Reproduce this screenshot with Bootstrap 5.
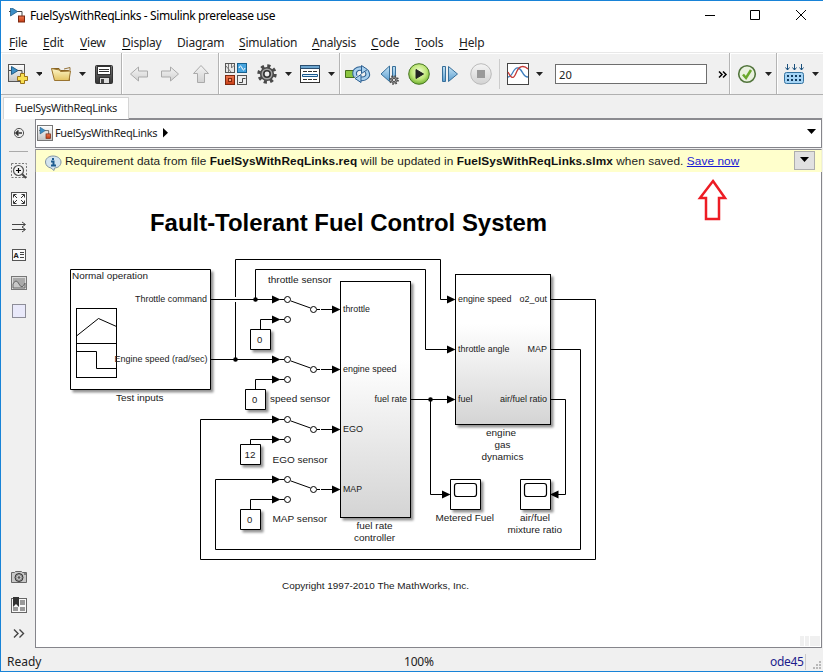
<!DOCTYPE html>
<html lang="en">
<head>
<meta charset="utf-8">
<meta name="viewport" content="width=device-width, initial-scale=1">
<title>FuelSysWithReqLinks - Simulink prerelease use</title>
<link href="https://cdn.jsdelivr.net/npm/bootstrap@5.3.0/dist/css/bootstrap.min.css" rel="stylesheet">
<style>
html,body{height:100%}
body{font-family:"Noto Sans","Open Sans",sans-serif;font-size:12px;line-height:16px;color:#1a1a1a;background:#fff;overflow:hidden}
svg{display:block;flex:none}
.win{height:672px;width:823px;border:1px solid #1883d7;border-right:0;background:#f0f0f0}
.titlebar{height:29px;color:#000;padding:7px 0 0 7px}
.title-text{letter-spacing:-.39px;padding-left:2px}
.menubar{height:23px;padding:5px 0 0 8px;color:#222;border-bottom:1px solid #e8e8e8}
.menubar a{color:inherit;text-decoration:none;letter-spacing:-.2px;white-space:nowrap;flex:none}
.menubar u{text-underline-offset:2px;text-decoration-color:#000}
.menubar a:nth-child(1){width:34px}.menubar a:nth-child(2){width:37px}.menubar a:nth-child(3){width:42px}
.menubar a:nth-child(4){width:55px}.menubar a:nth-child(5){width:62px}.menubar a:nth-child(6){width:73px}
.menubar a:nth-child(7){width:59px}.menubar a:nth-child(8){width:44px}.menubar a:nth-child(9){width:44px}
.tools{height:42px;border-bottom:1px solid #b0b0b0}
.grp{border-right:1px solid #b4b4b4;padding-top:6px;box-shadow:inset 1px 1px 0 #fff;height:41px}
.stop-time{width:152px;height:20px;margin:5px 0 0 4px;border:1px solid #6e6e6e;border-radius:0;background:#fff;padding:0 3px;font-size:11.2px;line-height:18px;color:#222}
.tabs{height:23px;padding:2px 0 0 2px}
.tab-doc{width:126px;height:22px;background:#fff;border:1px solid #d5d5d5;border-bottom:0;padding:2px 0 0 11px;font-size:11px;letter-spacing:-.35px;color:#222;position:relative;z-index:1;white-space:nowrap}
.side{width:34px}
.crumb{height:30px;border:1px solid #85858b;border-top:2px solid #8b8b90;background:#fff;color:#222;padding-bottom:2px}
.crumb .path-name{font-size:11px;letter-spacing:-.34px;margin-left:1px}
.notice{height:23px;background:#ffffcc;border-top:1px solid #8b8b90;border-left:1px solid #a0a0a0;border-right:1px solid #f4f4c8;font:11.8px/23px "Liberation Sans",Arial,sans-serif;color:#222;margin-top:1px;white-space:nowrap}
.notice .msg{letter-spacing:.09px}
.notice b{color:#111}
.notice a{color:#1717d6}
.drop{width:21px;height:19px;background:#e1e1e1;border:1px solid #adadad;margin:1px 6px 0 0}
.sheet{background:#fff;border-left:1px solid #85858b;border-right:1px solid #85858b;border-bottom:1px solid #85858b}
.sheet text{font-family:"Liberation Sans",Arial,sans-serif;font-size:9.5px;fill:#1a1a1a}
.sheet .heading{font-size:24px;font-weight:bold;fill:#000}
.status{height:23px;padding:6px 0 0 6px;color:#222}
.status .state{width:397px}
.status .zoom-level{width:366px;letter-spacing:-.2px}
.edge{width:1px}
.solver{color:#1c1c8c;letter-spacing:-.3px}
</style>
<script src="https://cdn.jsdelivr.net/npm/bootstrap@5.3.0/dist/js/bootstrap.bundle.min.js"></script>
</head>
<body>
<svg width="0" height="0" class="position-absolute" aria-hidden="true">
<defs>
<linearGradient id="gBlock" x1="0" y1="0" x2="0" y2="1"><stop offset=".33" stop-color="#fff"/><stop offset="1" stop-color="#d4d4d4"/></linearGradient>
<linearGradient id="gBlue" x1="0" y1="0" x2="0" y2="1"><stop offset="0" stop-color="#c5e3f5"/><stop offset="1" stop-color="#5a9dcf"/></linearGradient>
<linearGradient id="gGray" x1="0" y1="0" x2="0" y2="1"><stop offset="0" stop-color="#fff"/><stop offset="1" stop-color="#c4c4c4"/></linearGradient>
<linearGradient id="gPale" x1="0" y1="0" x2="0" y2="1"><stop offset="0" stop-color="#f4f4f4"/><stop offset="1" stop-color="#d2d2d2"/></linearGradient>
<linearGradient id="gDark" x1="0" y1="0" x2="0" y2="1"><stop offset="0" stop-color="#777"/><stop offset="1" stop-color="#333"/></linearGradient>
<linearGradient id="gOr" x1="0" y1="0" x2="0" y2="1"><stop offset="0" stop-color="#ee7a52"/><stop offset="1" stop-color="#c63c14"/></linearGradient>
<linearGradient id="gYel" x1="0" y1="0" x2="0" y2="1"><stop offset="0" stop-color="#fdf6c8"/><stop offset="1" stop-color="#e3c362"/></linearGradient>
<radialGradient id="gGreen" cx=".5" cy=".4" r=".6"><stop offset="0" stop-color="#f4ffdc"/><stop offset=".6" stop-color="#bfe678"/><stop offset="1" stop-color="#6fb030"/></radialGradient>
<filter id="shade" x="-20%" y="-20%" width="150%" height="150%"><feDropShadow dx="2.5" dy="2.5" stdDeviation="1.3" flood-color="#000" flood-opacity=".42"/></filter>
<g id="caret"><path d="M0 0h7l-3.500 4z" fill="#222"/></g>
<g id="slk"><path d="M8 5.500h5v5" fill="none" stroke="#444"/><path d="M0 5.500h2" stroke="#444"/><path d="M1.500 1l7 4.500-7 4.500z" fill="#3d8fc6" stroke="#225c85" stroke-width=".8"/><rect x="9.500" y="10" width="6" height="6" fill="url(#gOr)" stroke="#7c2810"/></g>
<g id="cog"><circle r="8" fill="none" stroke="#4a4a4a" stroke-width="3.400" stroke-dasharray="3.142 3.142"/><circle r="6.300" fill="#a4a4a4" stroke="#4a4a4a" stroke-width="1.600"/><circle r="3.200" fill="#eee" stroke="#333" stroke-width="1.600"/></g>
<g id="head"><path d="M0 -4l8.500 4-8.500 4z" fill="#000"/></g>
<g id="switch" fill="none" stroke="#000"><use href="#head" x="272" y=".5" stroke="none"/><use href="#head" x="272" y="20.500" stroke="none"/><path d="M280 .5h4M280 20.500h4M291 2l19.500 7M317 10.500h3M321 10.500h12"/><use href="#head" x="332" y="10.500" stroke="none"/><circle cx="287.500" cy=".5" r="3" fill="#fff"/><circle cx="287.500" cy="20.500" r="3" fill="#fff"/><circle cx="313.500" cy="10.500" r="3" fill="#fff"/></g>
</defs>
</svg>

<main class="win d-flex flex-column">
  <header class="titlebar bg-white d-flex">
    <svg width="20" height="20" viewBox="8 8 20 20"><use href="#slk" x="9" y="6"/></svg>
    <span class="title-text flex-grow-1">FuelSysWithReqLinks - Simulink prerelease use</span>
    <svg width="123" height="20" viewBox="700 8 123 20" fill="none" stroke="#000"><path d="M705 15.500h10M750.500 10.500h9v9h-9zM796 10l10 10M806 10l-10 10"/></svg>
  </header>
  <nav class="menubar bg-white d-flex">
    <a><u>F</u>ile</a><a><u>E</u>dit</a><a><u>V</u>iew</a><a><u>D</u>isplay</a><a>Diag<u>r</u>am</a><a><u>S</u>imulation</a><a><u>A</u>nalysis</a><a><u>C</u>ode</a><a><u>T</u>ools</a><a><u>H</u>elp</a>
  </nav>

  <div class="tools d-flex">
    <div class="grp d-flex">
      <svg width="41" height="30" viewBox="1 59 41 30"><rect x="8.500" y="64.500" width="16" height="17" fill="url(#gGray)" stroke="#555"/><path d="M9 70.500h2M17 70.500h5v4" fill="none" stroke="#444"/><path d="M11.500 66.500l6.500 4-6.500 4z" fill="#3d8fc6" stroke="#225c85"/><path d="M20.500 73.500h4v3h3v4h-3v3h-4v-3h-3v-4h3z" fill="#f8df50" stroke="#9a7218"/><use href="#caret" x="36" y="72"/></svg>
      <svg width="44" height="30" viewBox="42 59 44 30"><path d="M52 68.500h7l1.500 2h9v10h-14z" fill="#c7a556" stroke="#846021"/><path d="M51.500 68.500l3 12h14.500l1.500-9.500-10 .5-1-1.500z" fill="url(#gYel)" stroke="#9a7430"/><path d="M64 69l6-1.500v3" fill="#eee" stroke="#94733a"/><use href="#caret" x="79" y="72"/></svg>
      <svg width="35" height="30" viewBox="86 59 35 30"><rect x="95.500" y="65.500" width="17" height="18" rx="1" fill="url(#gDark)" stroke="#333"/><rect x="97.500" y="66.500" width="13" height="8" fill="#fff" stroke="#333"/><path d="M99 69.500h10M99 71.500h10" stroke="#333"/><rect x="99.500" y="77.500" width="10" height="6" fill="#ddd" stroke="#333"/><path d="M101 79h3v4h-3z" fill="#444"/></svg>
    </div>
    <div class="grp d-flex">
      <svg width="96" height="30" viewBox="122 59 96 30" fill="url(#gPale)" stroke="#aaa"><path d="M130.500 74l8-7v4h9v6h-9v4z"/><path d="M178.500 74l-8-7v4h-9v6h9v4z"/><path d="M201 65.500l7.500 8h-4v9h-7v-9h-4z"/></svg>
    </div>
    <div class="grp d-flex">
      <svg width="33" height="30" viewBox="219 59 33 30"><rect x="225.500" y="63.500" width="9" height="9" fill="#e8e8e8" stroke="#555"/><path d="M228.500 64v8M231.500 64v4l3-3M226 66l5 6" fill="none" stroke="#777"/><rect x="237.500" y="63.500" width="9" height="9" fill="#46a4df" stroke="#17618f"/><path d="M239 68q1.500-4 3 0t3 0" fill="none" stroke="#fff"/><rect x="225.500" y="75.500" width="9" height="9" fill="url(#gOr)" stroke="#7c2810"/><rect x="228.500" y="78.500" width="3" height="3" fill="#f6a284" stroke="#84280c"/><rect x="237.500" y="75.500" width="9" height="9" fill="#eee" stroke="#555"/><path d="M239 82.500h3.500v-4h3" fill="none" stroke="#444"/></svg>
      <svg width="41" height="30" viewBox="252 59 41 30"><use href="#cog" x="267" y="74"/><use href="#caret" x="285" y="72"/></svg>
      <svg width="46" height="30" viewBox="293 59 46 30"><rect x="300.500" y="65.500" width="19" height="17" fill="#fff" stroke="#333"/><path d="M300.500 65.500h19v3h-19z" fill="#6ca5cf" stroke="#294e70"/><path d="M303 71.500h15M303 79.500h15" stroke="#333" stroke-dasharray="4 1"/><path d="M302.500 74.500h15v2h-15z" fill="#ddeefa" stroke="#1b5b91"/><use href="#caret" x="328" y="72"/></svg>
    </div>
    <div class="grp d-flex">
      <svg width="35" height="30" viewBox="340 59 35 30"><path d="M345.500 70.500h9v7h-9z" fill="#8bc53f" stroke="#466d1c"/><g fill="none" stroke-linejoin="round"><path d="M355.500 76.500c-3-6 2-9 7.500-7.500M366.500 71c3.500 5-1 9-7.500 7.500" stroke="#2c5f91" stroke-width="4.600"/><path d="M355.500 76.500c-3-6 2-9 7.500-7.500M366.500 71c3.500 5-1 9-7.500 7.500" stroke="#a9d0ee" stroke-width="2.600"/></g><path d="M361.500 65.500l6 4-6 4zM361 74.500l-6 4 6 4z" fill="#a9d0ee" stroke="#2c5f91"/></svg>
      <svg width="30" height="30" viewBox="375 59 30 30"><path d="M389.500 66v15.500l-8.500-7.500zM392.500 66.500h3v12h-3z" fill="url(#gBlue)" stroke="#376f9a"/><g transform="translate(394 80) scale(.5)"><use href="#cog"/></g></svg>
      <svg width="31" height="30" viewBox="405 59 31 30"><circle cx="419" cy="74" r="10.300" fill="url(#gGreen)" stroke="#4a7924"/><path d="M416 69.500l7.500 4.500-7.500 4.500z" fill="#222" stroke="#222"/></svg>
      <svg width="28" height="30" viewBox="436 59 28 30"><path d="M442.500 66.500h3v15h-3zM448.500 66.500v15l9-7.500z" fill="url(#gBlue)" stroke="#376f9a"/></svg>
      <svg width="37" height="30" viewBox="464 59 37 30"><circle cx="481" cy="74" r="10.300" fill="url(#gPale)" stroke="#bbb"/><path d="M477 70h8v8h-8z" fill="#999"/><path d="M499.500 59v30" stroke="#ccc"/></svg>
      <svg width="50" height="30" viewBox="501 59 50 30"><rect x="507.500" y="63.500" width="21" height="21" fill="#fff" stroke="#444"/><path d="M508 77c5 0 5-10 10-9s4 9 10 9" fill="none" stroke="#3f7fbe" stroke-width="1.300"/><path d="M508 72c5 10 7 4 9-1s7-6 11-2" fill="none" stroke="#c63a36" stroke-width="1.300"/><use href="#caret" x="536" y="72"/></svg>
      <input class="stop-time" value="20" aria-label="Stop time">
      <svg width="22" height="30" viewBox="707 59 22 30"><path d="M719 71.500l3 3-3 3M723 71.500l3 3-3 3" fill="none" stroke="#000" stroke-width="1.500"/></svg>
    </div>
    <div class="grp d-flex">
      <svg width="46" height="30" viewBox="730 59 46 30"><circle cx="747" cy="74" r="8.300" fill="#e9f1df" stroke="#52753c" stroke-width="1.600"/><path d="M743 74.500l3 3.500 5-8" fill="none" stroke="#69a82c" stroke-width="2.500"/><use href="#caret" x="765" y="72"/></svg>
    </div>
    <div class="grp d-flex border-end-0">
      <svg width="46" height="30" viewBox="777 59 46 30"><path d="M787.500 64v6M794.500 64v6M801.500 64v6M785.500 67.500l2 2.500 2-2.500M792.500 67.500l2 2.500 2-2.500M799.500 67.500l2 2.500 2-2.500" fill="none" stroke="#194f7c"/><rect x="784.500" y="72.500" width="19" height="11" rx="2" fill="#a5d4f5" stroke="#34729f"/><path d="M787 76h14M787 80h14" stroke="#123c60" stroke-width="2" stroke-dasharray="2 2"/><use href="#caret" x="812" y="72"/></svg>
    </div>
  </div>

  <div class="tabs"><div class="tab-doc">FuelSysWithReqLinks</div></div>

  <div class="d-flex flex-grow-1">
    <aside class="side d-flex flex-column justify-content-between">
      <svg width="34" height="205" viewBox="1 118 34 205">
        <circle cx="19" cy="133" r="4.600" fill="#eee" stroke="#555"/><path d="M22 133h-5M18.500 130.500l-2.500 2.500 2.500 2.500" fill="none" stroke="#333" stroke-width="1.600"/>
        <path d="M9 151.500h19" stroke="#aaa"/>
        <rect x="11.500" y="163.500" width="15" height="14" fill="none" stroke="#777" stroke-dasharray="2 1.500"/><path d="M22 174l4 4" stroke="#444" stroke-width="2"/><circle cx="18.500" cy="170.500" r="5" fill="#f3f3f3" stroke="#555" stroke-width="1.200"/><path d="M16 170.500h5M18.500 168v5" stroke="#000" stroke-width="1.200"/>
        <rect x="11.500" y="192.500" width="15" height="13" fill="#fafafa" stroke="#555"/><path d="M16.500 194.500h-3v3M21.500 194.500h3v3M16.500 203.500h-3v-3M21.500 203.500h3v-3M14 195l3 3M24 195l-3 3M14 203l3-3M24 203l-3-3" fill="none" stroke="#333"/>
        <path d="M12 224.500h13M12 229.500h13M22 222l3.500 2.500-3.500 2.500M22 227l3.500 2.500-3.500 2.500" fill="none" stroke="#444"/>
        <rect x="12.500" y="249.500" width="13" height="11" fill="#fafafa" stroke="#555"/><text x="13.500" y="258" font-family="Noto Sans" font-weight="bold" font-size="7.500" fill="#222">A</text><path d="M20 252.500h4M20 254.500h4M20 257.500h4" stroke="#444"/>
        <rect x="11.500" y="276.500" width="15" height="13" fill="#ddd" stroke="#777"/><path d="M13 278h12v10h-12z" fill="#aaa"/><path d="M13 284q3-6 6 0t6-1v5h-12z" fill="#c9c9c9" stroke="#666"/>
        <rect x="12.500" y="304.500" width="13" height="13" fill="#e9e9fa" stroke="#8d8d98"/>
      </svg>
      <svg width="34" height="84" viewBox="1 564 34 84">
        <path d="M11.500 572.500h3l1-1h6l1 1h4v10h-15z" fill="#c8c8c8" stroke="#666"/><circle cx="19" cy="577.500" r="4" fill="#999" stroke="#333"/><circle cx="19" cy="577.500" r="1.800" fill="#555" stroke="#eee" stroke-width=".7"/><path d="M24 574h2" stroke="#333"/>
        <rect x="11.500" y="598.500" width="15" height="14" fill="#f8f8f8" stroke="#666"/><path d="M20 600h5v5h-5zM20 607h5v4h-5zM13 607h5v4h-5z" fill="#999"/><path d="M13 597h6v10l-3-3-3 3z" fill="#333"/>
        <path d="M14 629.500l4 4-4 4M19.500 629.500l4 4-4 4" fill="none" stroke="#444" stroke-width="1.400"/>
      </svg>
    </aside>

    <section class="d-flex flex-column flex-grow-1">
      <div class="crumb d-flex align-items-center">
        <svg width="18" height="18" viewBox="37 124 18 18"><rect x="38.500" y="125.500" width="15" height="15" fill="url(#gGray)" stroke="#777"/><g transform="translate(40 126.500) scale(.74)"><use href="#slk"/></g></svg>
        <span class="path-name">FuelSysWithReqLinks</span>
        <svg class="ms-1 me-auto" width="9" height="12" viewBox="0 0 9 12"><path d="M2 1v9.500l5-4.700z"/></svg>
        <svg width="18" height="12" viewBox="0 0 18 12"><path d="M4 2h9l-4.500 5z"/></svg>
      </div>
      <div class="notice d-flex">
        <svg width="29" height="22" viewBox="36 150 29 22"><path d="M53 156c-4.500 0-7.500 2.700-7.500 6s2.500 5.500 5.500 6l3 2.500.5-2.500c4-.2 6.500-2.700 6.500-6s-3.500-6-8-6z" fill="#d3e4ef" stroke="#8293a0"/><path d="M53 158v2M51 161.500h2.500v4M51 165.500h5" fill="none" stroke="#1d5b8f" stroke-width="2"/></svg>
        <span class="msg me-auto">Requirement data from file <b>FuelSysWithReqLinks.req</b> will be updated in <b>FuelSysWithReqLinks.slmx</b> when saved. <a href="#">Save now</a></span>
        <span class="drop d-flex justify-content-center"><svg width="9" height="14" viewBox="0 0 9 14"><path d="M0 5h9l-4.500 5z"/></svg></span>
      </div>
      <div class="sheet flex-grow-1">
        <svg width="785" height="475" viewBox="36 172 785 475">
          <text class="heading" x="150" y="231" textLength="397">Fault-Tolerant Fuel Control System</text>
          <path d="M713 181l12 17h-6v21h-13v-21h-6z" fill="none" stroke="#ed1c24" stroke-width="2.500"/>

          <!-- blocks -->
          <g stroke="#000" fill="#fff" filter="url(#shade)">
            <path d="M70.500 269.500h140v120h-140z"/>
            <path d="M340.500 281.500h70v236h-70zM455.500 274.500h95v150h-95z"/>
            <path d="M250.500 329.500h20v20h-20zM245.500 389.500h20v20h-20zM240.500 444.500h20v20h-20zM240.500 509.500h20v20h-20z"/>
            <path d="M450.500 479.500h30v30h-30zM520.500 479.500h30v30h-30z"/>
          </g>
          <rect x="340.500" y="281.500" width="70" height="236" fill="url(#gBlock)" stroke="#000"/>
          <rect x="455.500" y="274.500" width="95" height="150" fill="url(#gBlock)" stroke="#000"/>

          <!-- signal lines -->
          <g fill="none" stroke="#000">
            <path d="M235.500 359.500V302M235.500 297V259.500H440.500V299.500H448"/>
            <path d="M211 299.500H273M211 359.500H273"/>
            <path d="M255.500 299.500V269.500H425.500V349.500H448"/>
            <path d="M551 299.500H595.500V559.500H200.500V419.500H273"/>
            <path d="M551 349.500H580.500V549.500H215.500V479.500H273"/>
            <path d="M551 399.500H565.500V494.500H558M411 399.500H448M430.500 399.500V494.500H443"/>
            <path d="M260.500 329V319.500H273M255.500 389V379.500H273M250.500 444V439.500H273M250.500 509V499.500H273"/>
            <rect x="76.500" y="308.500" width="40" height="69"/><path d="M76 343.500h41M76.500 336l22-17.500 18 8M76.500 351.500h20v17h20"/>
            <rect x="454.500" y="483.500" width="22" height="13" rx="2.500" stroke-width="1.200"/><rect x="524.500" y="483.500" width="22" height="13" rx="2.500" stroke-width="1.200"/>
          </g>
          <use href="#head" x="447" y="299.500"/><use href="#head" x="447" y="349.500"/><use href="#head" x="447" y="399.500"/><use href="#head" x="442" y="494.500"/>
          <path d="M558.500 490.500l-8.500 4 8.500 4z"/>
          <circle cx="235.500" cy="359.500" r="2.300"/><circle cx="255.500" cy="299.500" r="2.300"/><circle cx="430.500" cy="399.500" r="2.300"/>
          <use href="#switch" y="299"/><use href="#switch" y="359"/><use href="#switch" y="419"/><use href="#switch" y="479"/>

          <!-- labels -->
          <text x="72" y="279" textLength="76">Normal operation</text>
          <text x="135" y="302" textLength="72">Throttle command</text>
          <text x="114.500" y="362" textLength="93">Engine speed (rad/sec)</text>
          <text x="116" y="401" textLength="47.500">Test inputs</text>
          <text x="268" y="283" textLength="63.500">throttle sensor</text>
          <text x="270" y="402" textLength="60">speed sensor</text>
          <text x="272.500" y="463" textLength="55">EGO sensor</text>
          <text x="272.500" y="522" textLength="54.500">MAP sensor</text>
          <text x="257" y="343">0</text><text x="252" y="403">0</text><text x="244.500" y="458" textLength="11">12</text><text x="247" y="523">0</text>
          <text x="343" y="312" textLength="27">throttle</text>
          <text x="343" y="372" textLength="53.500">engine speed</text>
          <text x="374.500" y="402" textLength="32.500">fuel rate</text>
          <text x="343" y="432" textLength="20">EGO</text>
          <text x="343" y="492" textLength="19">MAP</text>
          <text x="356.500" y="529" textLength="36">fuel rate</text>
          <text x="354" y="541" textLength="41">controller</text>
          <text x="458" y="302" textLength="53.500">engine speed</text>
          <text x="519.500" y="302" textLength="27.500">o2_out</text>
          <text x="458" y="352" textLength="51.500">throttle angle</text>
          <text x="527.500" y="352" textLength="19.500">MAP</text>
          <text x="458" y="402" textLength="14.500">fuel</text>
          <text x="500" y="402" textLength="47">air/fuel ratio</text>
          <text x="486" y="436" textLength="30">engine</text>
          <text x="494.500" y="448" textLength="16">gas</text>
          <text x="481.500" y="460" textLength="42">dynamics</text>
          <text x="435.500" y="521" textLength="58.500">Metered Fuel</text>
          <text x="520" y="521" textLength="30">air/fuel</text>
          <text x="507.500" y="533" textLength="54.500">mixture ratio</text>
          <text x="282" y="589" textLength="187">Copyright 1997-2010 The MathWorks, Inc.</text>
          <path d="M800 636h4v10h-4zM805 636h4v10h-4zM810 636h10v10h-10z" fill="#f0f0f0"/>
        </svg>
      </div>
    </section>
    <div class="edge"></div>
  </div>

  <footer class="status d-flex">
    <span class="state">Ready</span><span class="zoom-level">100%</span><span class="solver">ode45</span>
    <svg class="ms-auto" width="18" height="18" viewBox="805 654 18 18"><path d="M805.500 653v17" stroke="#ccc"/><path d="M819 661h2v2h-2zM816 664h2v2h-2zM819 664h2v2h-2zM813 667h2v2h-2zM816 667h2v2h-2zM819 667h2v2h-2z" fill="#b8b8b8"/></svg>
  </footer>
</main>
<script>
// Scale label glyphs evenly to their set width instead of spacing the letters
document.querySelectorAll('.sheet text[textLength]').forEach(t => t.setAttribute('lengthAdjust', 'spacingAndGlyphs'));
</script>
</body>
</html>
